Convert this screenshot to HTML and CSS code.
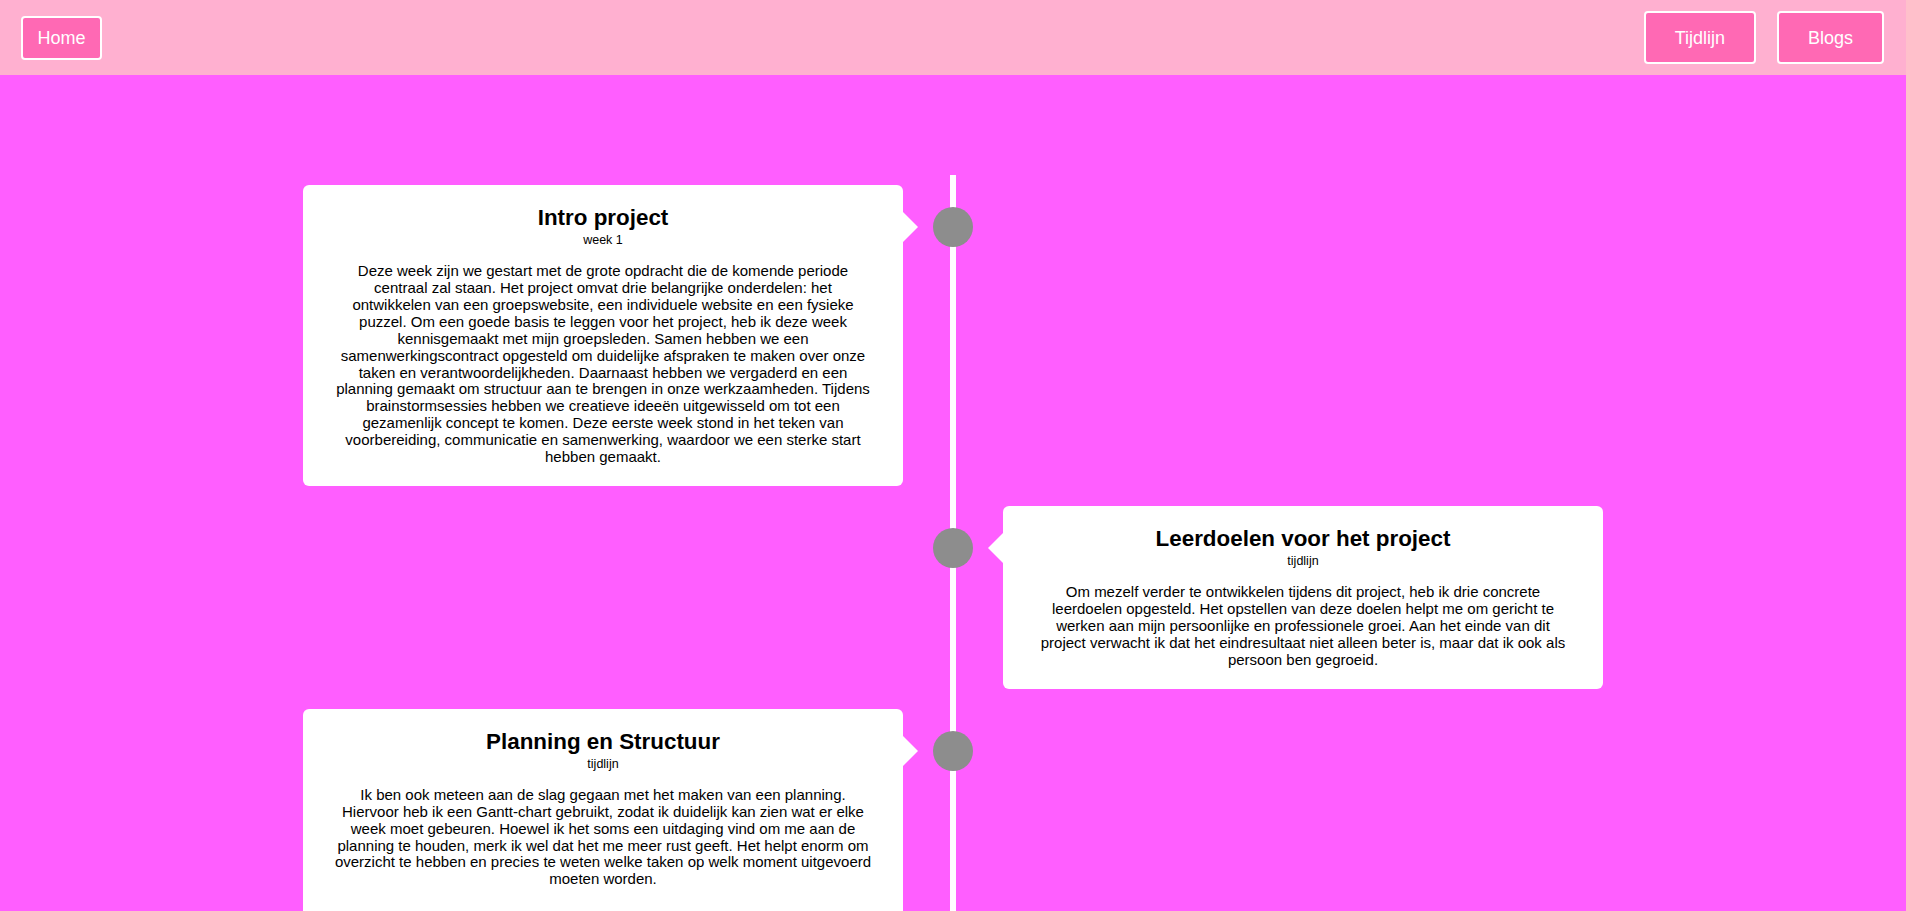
FILE: index.html
```html
<!DOCTYPE html>
<html lang="nl">
<head>
<meta charset="utf-8">
<title>Tijdlijn</title>
<link rel="stylesheet" href="styles.css">
</head>
<body>
<header class="topbar">
  <a class="nav-btn nav-home" href="#">Home</a>
  <nav class="nav-right">
    <a class="nav-btn nav-wide" href="#">Tijdlijn</a>
    <a class="nav-btn nav-wide" href="#">Blogs</a>
  </nav>
</header>
<main class="timeline">
  <div class="entry entry-left">
    <div class="card">
      <h2 class="card-title">Intro project</h2>
      <p class="card-sub">week 1</p>
      <p class="card-text">Deze week zijn we gestart met de grote opdracht die de komende periode centraal zal staan. Het project omvat drie belangrijke onderdelen: het ontwikkelen van een groepswebsite, een individuele website en een fysieke puzzel. Om een goede basis te leggen voor het project, heb ik deze week kennisgemaakt met mijn groepsleden. Samen hebben we een samenwerkingscontract opgesteld om duidelijke afspraken te maken over onze taken en verantwoordelijkheden. Daarnaast hebben we vergaderd en een planning gemaakt om structuur aan te brengen in onze werkzaamheden. Tijdens brainstormsessies hebben we creatieve ideeën uitgewisseld om tot een gezamenlijk concept te komen. Deze eerste week stond in het teken van voorbereiding, communicatie en samenwerking, waardoor we een sterke start hebben gemaakt.</p>
    </div>
  </div>
  <div class="entry entry-right">
    <div class="card">
      <h2 class="card-title">Leerdoelen voor het project</h2>
      <p class="card-sub">tijdlijn</p>
      <p class="card-text">Om mezelf verder te ontwikkelen tijdens dit project, heb ik drie concrete leerdoelen opgesteld. Het opstellen van deze doelen helpt me om gericht te werken aan mijn persoonlijke en professionele groei. Aan het einde van dit project verwacht ik dat het eindresultaat niet alleen beter is, maar dat ik ook als persoon ben gegroeid.</p>
    </div>
  </div>
  <div class="entry entry-left">
    <div class="card">
      <h2 class="card-title">Planning en Structuur</h2>
      <p class="card-sub">tijdlijn</p>
      <p class="card-text">Ik ben ook meteen aan de slag gegaan met het maken van een planning. Hiervoor heb ik een Gantt-chart gebruikt, zodat ik duidelijk kan zien wat er elke week moet gebeuren. Hoewel ik het soms een uitdaging vind om me aan de planning te houden, merk ik wel dat het me meer rust geeft. Het helpt enorm om overzicht te hebben en precies te weten welke taken op welk moment uitgevoerd moeten worden.</p>
      <div class="chart">
        <div class="chart-col"></div>
        <div class="chart-col chart-col-wide"></div>
        <div class="chart-col"></div>
      </div>
    </div>
  </div>
</main>
</body>
</html>
```

FILE: styles.css
```css
html, body {
  margin: 0;
  padding: 0;
}

body {
  background: #ff5eff;
  font-family: "Liberation Sans", Arial, sans-serif;
  color: #000;
}

.topbar {
  height: 75px;
  background: #ffb0d0;
  display: flex;
  align-items: center;
  justify-content: space-between;
  padding: 0 22px 0 21px;
}

.nav-right {
  display: flex;
  align-items: center;
  gap: 21px;
}

.nav-btn {
  display: block;
  background: #ff69b4;
  color: #fff;
  text-decoration: none;
  font-size: 18px;
  line-height: 20px;
  border: 2px solid #fff;
  border-radius: 4px;
}

.nav-home {
  padding: 10px 14.5px;
}

.nav-wide {
  padding: 14.5px 29px;
}

.timeline {
  position: relative;
  width: 1300px;
  margin: 100px auto 0;
  padding: 10px 0 60px;
  display: flex;
  flex-direction: column;
  gap: 20px;
}

.timeline::after {
  content: "";
  position: absolute;
  top: 0;
  bottom: 0;
  left: 50%;
  width: 6px;
  margin-left: -3px;
  background: #fff;
}

.entry {
  position: relative;
  width: 50%;
  box-sizing: border-box;
}

.entry::after {
  content: "";
  position: absolute;
  top: 22px;
  width: 40px;
  height: 40px;
  border-radius: 50%;
  background: #8d8d8d;
  z-index: 2;
}

.entry-left {
  padding-right: 50px;
}

.entry-left::after {
  right: -20px;
}

.entry-right {
  margin-left: 50%;
  padding-left: 50px;
}

.entry-right::after {
  left: -20px;
}

.card {
  position: relative;
  background: #fff;
  border-radius: 6px;
  padding: 20px 30px;
  text-align: center;
}

.card::before {
  content: "";
  position: absolute;
  top: 27px;
  width: 0;
  height: 0;
  border-style: solid;
}

.entry-left .card::before {
  right: -15px;
  border-width: 15px 0 15px 15px;
  border-color: transparent transparent transparent #fff;
}

.entry-right .card::before {
  left: -15px;
  border-width: 15px 15px 15px 0;
  border-color: transparent #fff transparent transparent;
}

.card-title {
  margin: 0;
  font-size: 22.4px;
  line-height: 1.15;
  font-weight: 700;
}

.card-sub {
  margin: 2.5px 0 0;
  font-size: 12.5px;
  line-height: 1.15;
}

.card-text {
  margin: 15.5px 0 0;
  font-size: 15px;
  line-height: 16.9px;
}

.chart {
  margin: 23px auto 0;
  width: 433px;
  height: 240px;
  border: 1px solid #eeeeee;
  box-sizing: border-box;
  display: flex;
}

.chart-col {
  flex: 1;
  border-right: 1px solid #f2f2f2;
}

.chart-col-wide {
  flex: 3;
}
```
